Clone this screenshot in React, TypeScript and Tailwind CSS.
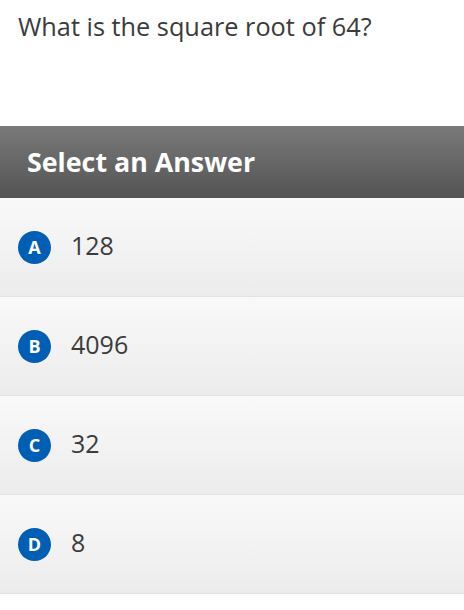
import React from "react";

const answers = [
  { letter: "A", text: "128" },
  { letter: "B", text: "4096" },
  { letter: "C", text: "32" },
  { letter: "D", text: "8" },
];

export default function App() {
  return (
    <div
      className="w-[464px] h-[610px] bg-white overflow-hidden"
      style={{ fontFamily: '"Open Sans", "Noto Sans", sans-serif' }}
    >
      <div className="h-[126px] pl-[18px] pt-[8px]">
        <h1 className="text-[25.3px] leading-[36px] text-[#3b3b3b] font-normal">
          What is the square root of 64?
        </h1>
      </div>
      <div className="h-[72px] flex items-center pl-[27px] bg-gradient-to-b from-[#7a7a7a] to-[#545454]">
        <h2 className="text-[26.8px] font-bold text-white leading-none">Select an Answer</h2>
      </div>
      <div className="flex flex-col">
        {answers.map((a) => (
          <div
            key={a.letter}
            className="h-[99px] flex items-center pl-[18px] border-b border-[#e2e2e2] bg-gradient-to-b from-[#f9f9f9] to-[#ececec]"
          >
            <span className="h-[33px] min-w-[33px] px-[1px] rounded-full bg-[#005eb4] text-white font-bold text-[18px] flex items-center justify-center leading-none">
              {a.letter}
            </span>
            <span className="ml-[20px] mb-[3px] text-[25px] text-[#3b3b3b] leading-none">{a.text}</span>
          </div>
        ))}
      </div>
    </div>
  );
}
